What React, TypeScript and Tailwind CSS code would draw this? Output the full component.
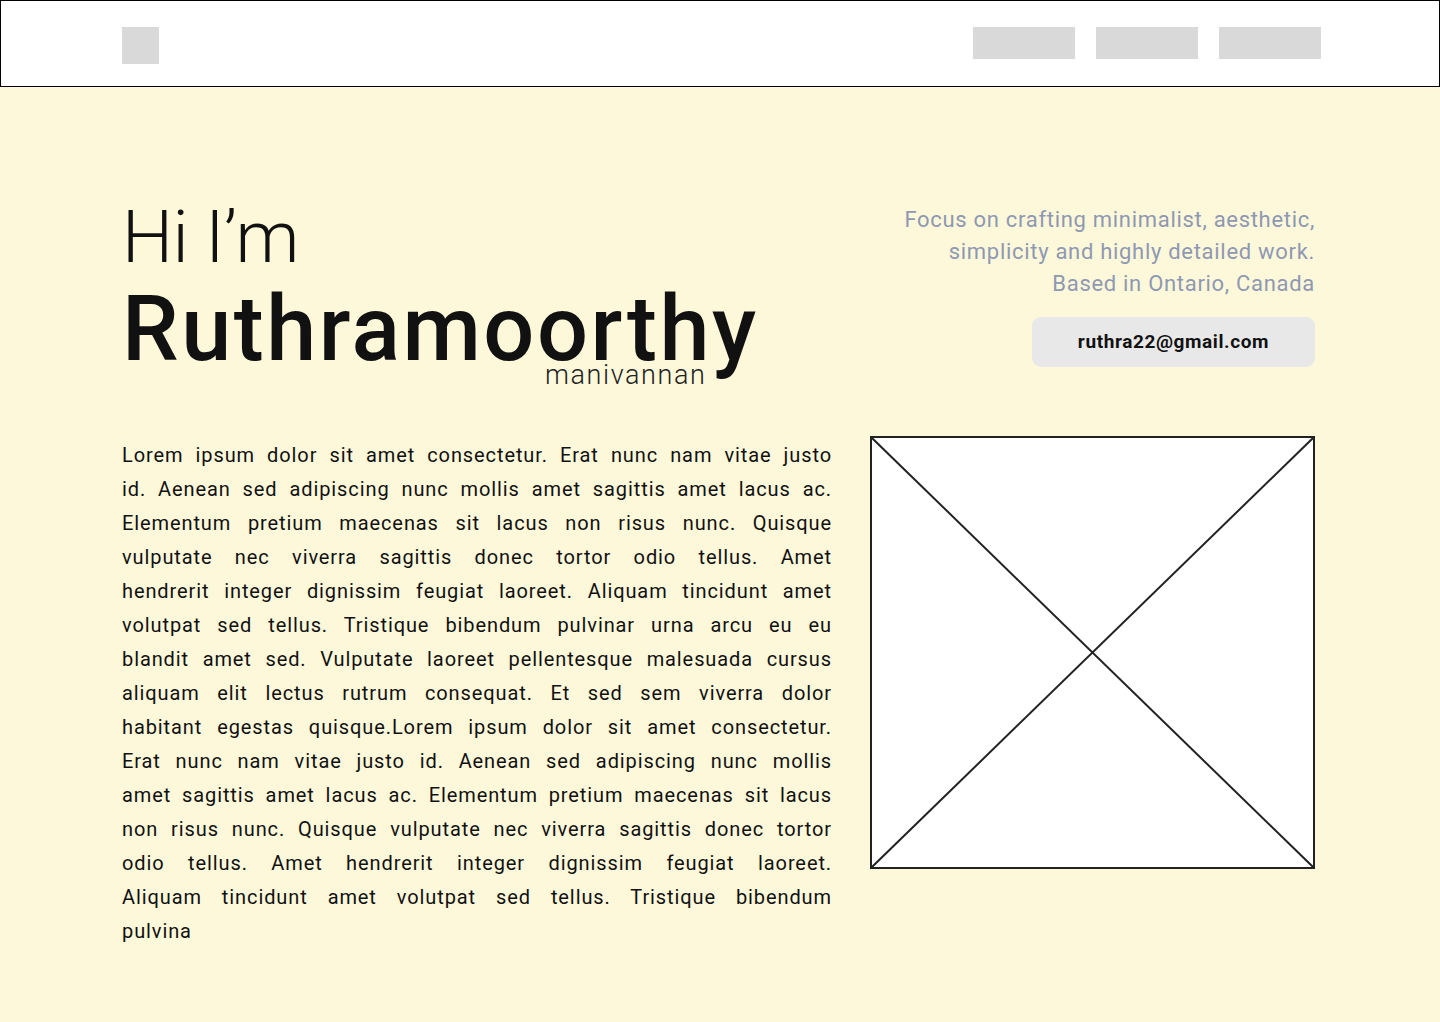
import React from "react";

const bodyLines = [
  "Lorem ipsum dolor sit amet consectetur. Erat nunc nam vitae justo",
  "id. Aenean sed adipiscing nunc mollis amet sagittis amet lacus ac.",
  "Elementum pretium maecenas sit lacus non risus nunc. Quisque",
  "vulputate nec viverra sagittis donec tortor odio tellus. Amet",
  "hendrerit integer dignissim feugiat laoreet. Aliquam tincidunt amet",
  "volutpat sed tellus. Tristique bibendum pulvinar urna arcu eu eu",
  "blandit amet sed. Vulputate laoreet pellentesque malesuada cursus",
  "aliquam elit lectus rutrum consequat. Et sed sem viverra dolor",
  "habitant egestas quisque.Lorem ipsum dolor sit amet consectetur.",
  "Erat nunc nam vitae justo id. Aenean sed adipiscing nunc mollis",
  "amet sagittis amet lacus ac. Elementum pretium maecenas sit lacus",
  "non risus nunc. Quisque vulputate nec viverra sagittis donec tortor",
  "odio tellus. Amet hendrerit integer dignissim feugiat laoreet.",
  "Aliquam tincidunt amet volutpat sed tellus. Tristique bibendum",
  "pulvina",
];

const Navbar = () => (
  <header className="h-[87px] bg-white border border-black flex items-start justify-between pl-[121px] pr-[118px] pt-[26px]">
    <div className="w-[37px] h-[37px] bg-[#d9d9d9]" />
    <nav className="flex gap-[21px]">
      {[0, 1, 2].map((i) => (
        <div key={i} className="w-[102px] h-[32px] bg-[#d9d9d9]" />
      ))}
    </nav>
  </header>
);

const ImagePlaceholder = () => (
  <div className="w-[445px] h-[433px] shrink-0 bg-white border-2 border-[#222222] relative">
    <svg
      className="absolute inset-0 w-full h-full"
      viewBox="0 0 100 100"
      preserveAspectRatio="none"
    >
      <line x1="0" y1="0" x2="100" y2="100" stroke="#222222" strokeWidth="2" vectorEffect="non-scaling-stroke" />
      <line x1="100" y1="0" x2="0" y2="100" stroke="#222222" strokeWidth="2" vectorEffect="non-scaling-stroke" />
    </svg>
  </div>
);

export default function App() {
  return (
    <div
      className="min-h-[1022px] bg-[#fdf8da] text-[#111111]"
      style={{ fontFamily: "Roboto, 'Liberation Sans', sans-serif" }}
    >
      <Navbar />

      <main className="pl-[122px] pr-[125px] pt-[112px]">
        {/* Hero */}
        <section className="flex justify-between items-start">
          <div>
            <h1 className="text-[72px] font-light leading-[78px] tracking-[-0.5px]">Hi I’m</h1>
            <div className="relative mt-[8px] w-fit">
              <h2 className="text-[90px] font-medium leading-[90px] tracking-[2.5px]">Ruthramoorthy</h2>
              <span className="absolute right-[52px] bottom-[-14px] text-[27px] font-light leading-none tracking-[1.6px] text-[#222222]">
                manivannan
              </span>
            </div>
          </div>

          <div className="flex flex-col items-end pt-[5px]">
            <p className="text-right text-[22px] leading-[32px] font-normal tracking-[0.7px] text-[#8e98b2]">
              Focus on crafting minimalist, aesthetic,
              <br />
              simplicity and highly detailed work.
              <br />
              Based in Ontario, Canada
            </p>
            <a className="mt-[17px] w-[283px] h-[50px] rounded-[9px] bg-[#e8e8e8] flex items-center justify-center text-[19px] font-bold tracking-[0.6px] text-[#111111]">
              ruthra22@gmail.com
            </a>
          </div>
        </section>

        {/* About */}
        <section className="flex justify-between items-start mt-[61px]">
          <div className="w-[710px] mt-[2px] text-[20px] leading-[34px] tracking-[0.9px]">
            {bodyLines.map((line, i) => (
              <p
                key={i}
                className={
                  i < bodyLines.length - 1
                    ? "text-justify [text-align-last:justify] whitespace-nowrap"
                    : "text-left"
                }
              >
                {line}
              </p>
            ))}
          </div>
          <ImagePlaceholder />
        </section>
      </main>
    </div>
  );
}
